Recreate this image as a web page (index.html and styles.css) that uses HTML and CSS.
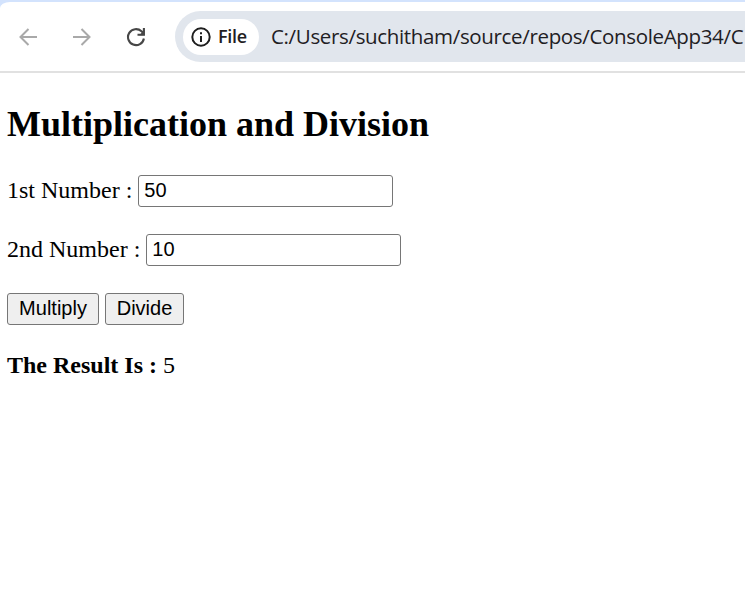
FILE: index.html
```
<!DOCTYPE html>
<html lang="en">
<head>
<meta charset="utf-8">
<title>Multiplication and Division</title>
<link rel="stylesheet" href="styles.css">
</head>
<body>
<header class="browser">
  <div class="toolbar">
    <svg class="nav" viewBox="0 0 20 20"><path d="M19 10H3M10.500 2L2.500 10L10.500 18"/></svg>
    <svg class="nav" viewBox="0 0 20 20"><path d="M1 10H17M9.500 2L17.500 10L9.500 18"/></svg>
    <svg class="nav reload" viewBox="0 0 20 20"><path d="M17.900 11.500A8 8 0 1 1 15.500 4.300L17.500 6.300M17.900 1V7.700H11.500"/><path class="tip" d="M18.500 3V8.300H13.200Z"/></svg>
    <div class="address">
      <div class="chip">
        <svg class="info" viewBox="0 0 20 20"><circle cx="10" cy="10" r="8.700"/><path d="M10 9V15M10 5.200V7.200"/></svg>
        <span class="scheme">File</span>
      </div>
      <span class="url">C:/Users/suchitham/source/repos/ConsoleApp34/C</span>
    </div>
  </div>
</header>
<main class="page">
  <h2 class="title">Multiplication and Division</h2>
  <form class="calc">
    <div class="row"><label for="first">1st Number :</label><input class="field" id="first" type="text" value="50"></div>
    <div class="row"><label for="second">2nd Number :</label><input class="field" id="second" type="text" value="10"></div>
    <div class="row"><button class="btn multiply" type="button">Multiply</button><button class="btn divide" type="button">Divide</button></div>
  </form>
  <p class="result"><b>The Result Is :</b> <span>5</span></p>
</main>
</body>
</html>
```
FILE: styles.css
```
* { box-sizing: border-box; }
body { margin: 0; background: #fff; color: #000; overflow: hidden; }
.browser { background: #d3e3fd; padding-top: 2px; }
.toolbar {
  display: flex; align-items: center; height: 71px; padding-left: 18px;
  background: #fff; border-bottom: 2px solid #e1e1e1; border-top-left-radius: 10px 6px;
  overflow: hidden;
}
.nav { flex: none; width: 20px; height: 20px; margin-right: 34px; fill: none; stroke: #a9a9a9; stroke-width: 2; }
.reload { stroke: #474747; stroke-width: 2.1; margin-right: 29px; }
.reload .tip { fill: #474747; stroke: none; }
.address {
  flex: 1; min-width: 0; display: flex; align-items: center; height: 51px; padding-left: 8px;
  background: #e1e6ed; border-radius: 26px 0 0 26px; color: #1f2023; white-space: nowrap; overflow: hidden;
}
.chip {
  flex: none; display: flex; align-items: center; width: 76px; height: 36px; padding-left: 8px;
  background: #fff; border-radius: 18px;
}
.info { flex: none; width: 20px; height: 20px; margin-right: 7px; fill: none; stroke: #1f1f1f; stroke-width: 2; }
.scheme { padding-bottom: 2px; font: 600 18px/24px "Open Sans", sans-serif; letter-spacing: -0.3px; }
.url { margin-left: 12px; padding-bottom: 2px; font: 400 20.5px/28px "Open Sans", sans-serif; letter-spacing: -0.34px; }
.page { padding: 31px 7px 0; font: 24px/27px "Liberation Serif", serif; }
.title { margin: 0 0 30px; font-size: 36px; line-height: 41px; font-weight: 700; white-space: nowrap; }
.row { display: flex; align-items: center; height: 32px; margin-bottom: 27px; }
.row label { padding-bottom: 2px; }
.field {
  width: 255px; height: 32px; margin: 0 0 0 6px; padding: 1px 5px 3px; border: 1px solid #767676; border-radius: 3px;
  background: #fff; color: #000; font: 20px "Liberation Sans", sans-serif;
}
.btn {
  height: 32px; margin: 0 6px 0 0; padding: 0 0 2px; border: 1px solid #767676; border-radius: 3px;
  background: #efefef; color: #000; font: 20px "Liberation Sans", sans-serif;
}
.multiply { width: 92px; }
.divide { width: 79px; }
.result { margin: 0; }
```
